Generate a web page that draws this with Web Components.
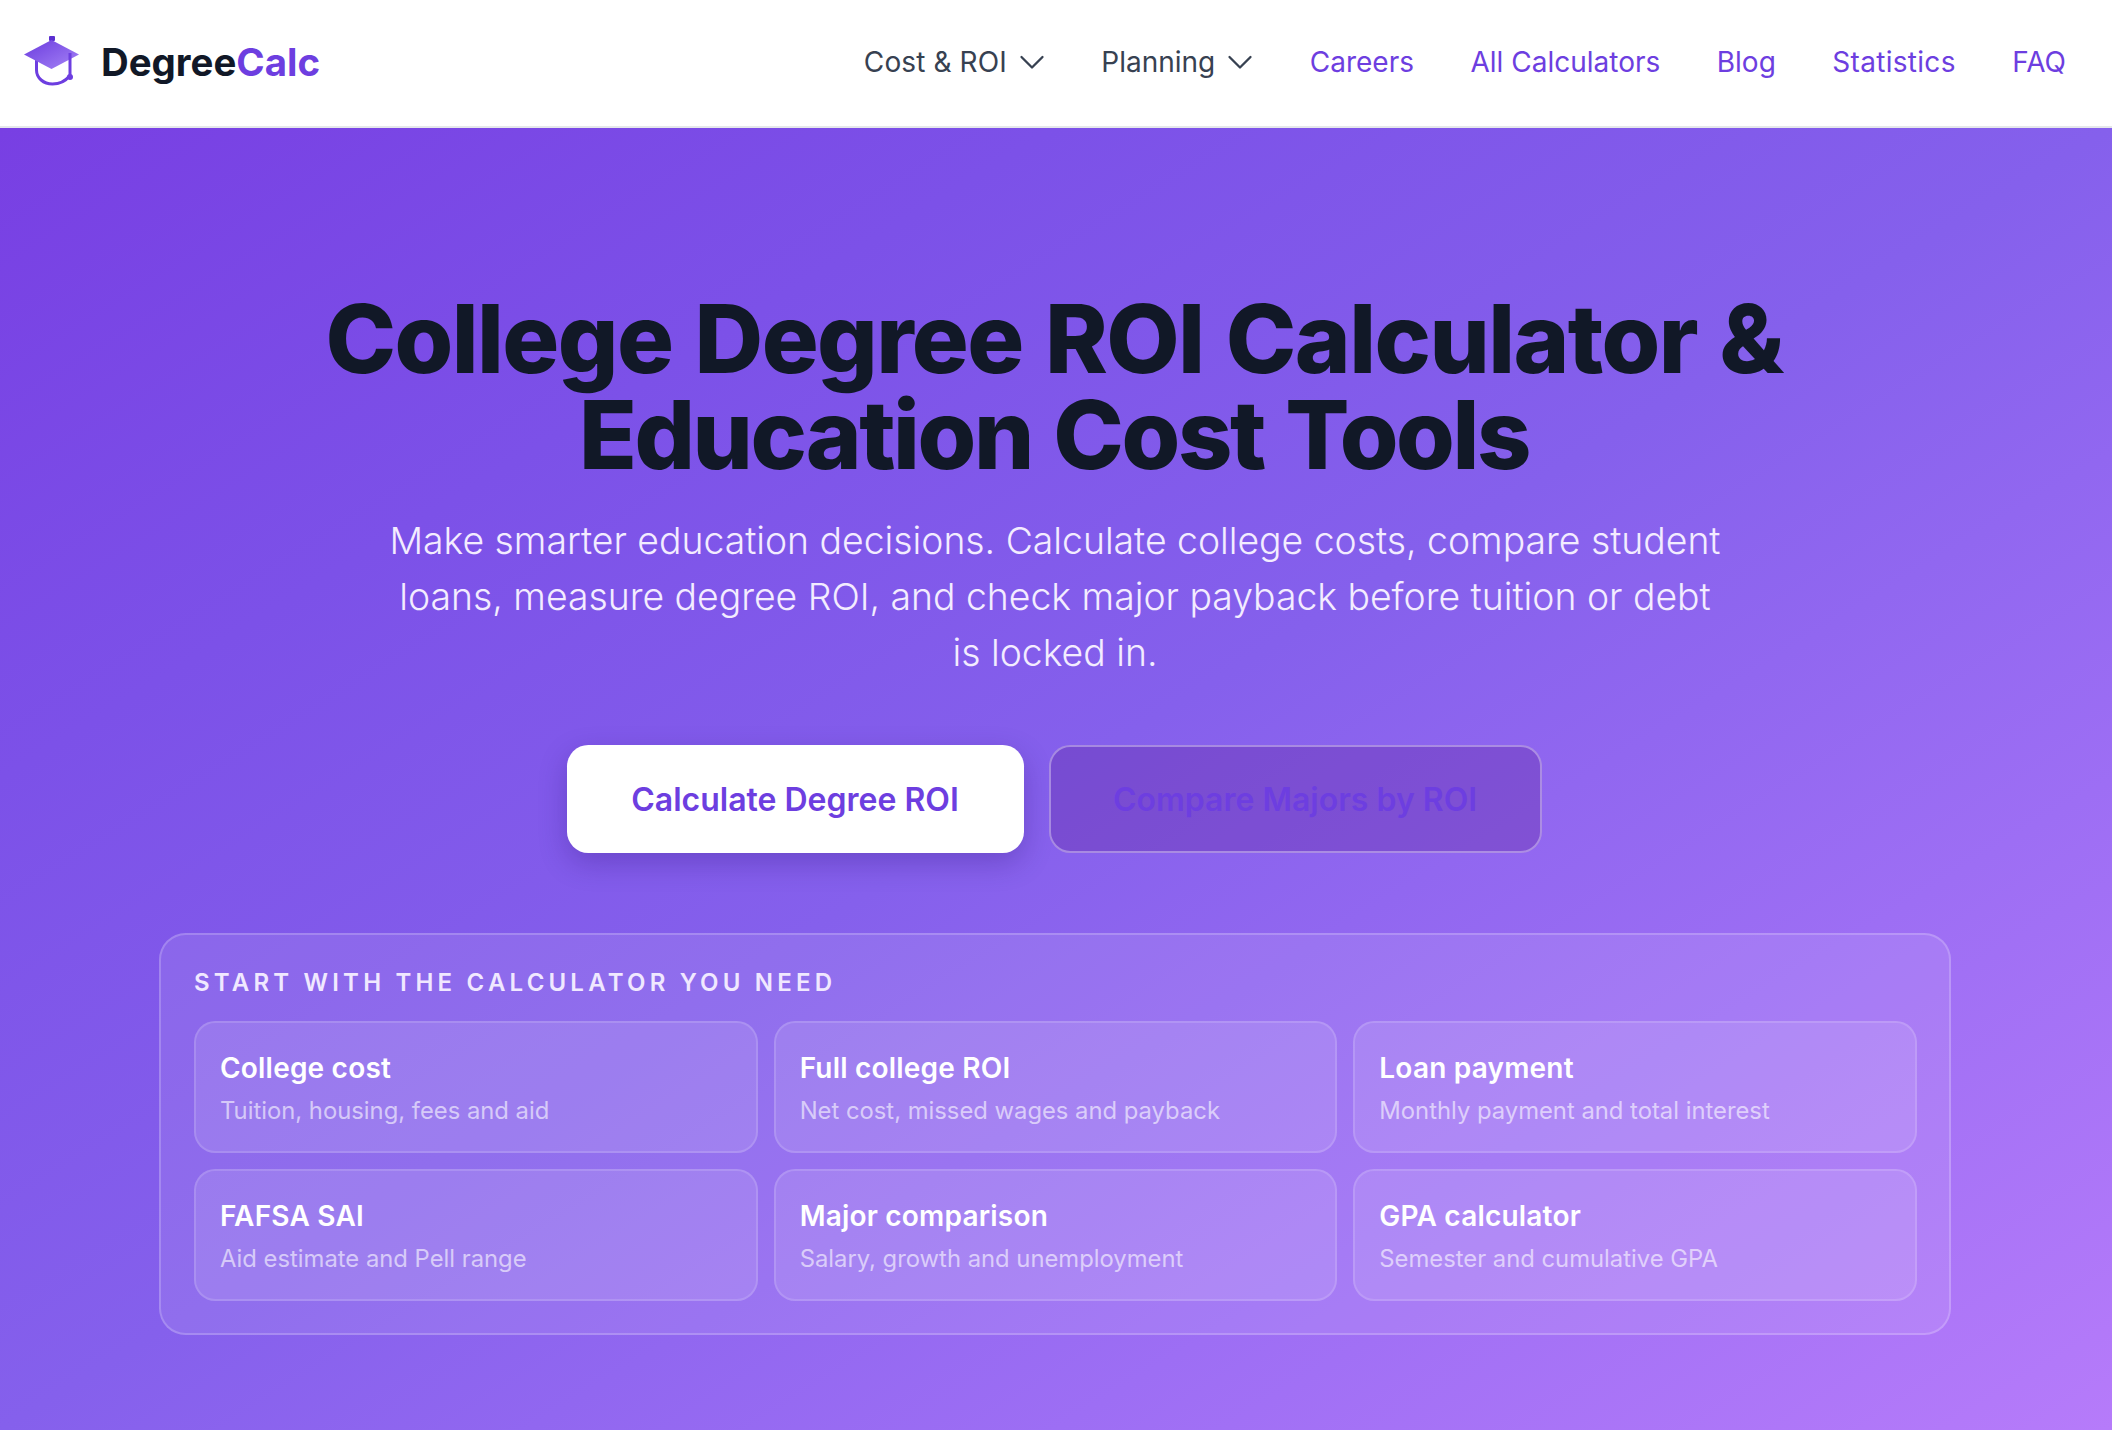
<!DOCTYPE html>
<html lang="en"><head><meta charset="utf-8"><title>DegreeCalc</title>
<style>
html,body{margin:0;padding:0;height:1430px;overflow:hidden;background:#fff}
body{font-family:Inter,"Liberation Sans",sans-serif}
</style></head><body>
<site-nav></site-nav>
<hero-section>
  <h1 slot="title">College Degree ROI Calculator &amp;<br><span style="letter-spacing:-2.400px">Education Cost Tools</span></h1>
  <span slot="sub">Make smarter education decisions. Calculate college costs, compare student loans, measure degree ROI, and check major payback before tuition or debt is locked in.</span>
  <cta-button slot="cta" kind="primary">Calculate Degree ROI</cta-button>
  <cta-button slot="cta" kind="ghost">Compare Majors by ROI</cta-button>
  <tool-panel slot="panel" heading="START WITH THE CALCULATOR YOU NEED">
    <tool-card name="College cost" desc="Tuition, housing, fees and aid"></tool-card>
    <tool-card name="Full college ROI" desc="Net cost, missed wages and payback"></tool-card>
    <tool-card name="Loan payment" desc="Monthly payment and total interest"></tool-card>
    <tool-card name="FAFSA SAI" desc="Aid estimate and Pell range"></tool-card>
    <tool-card name="Major comparison" desc="Salary, growth and unemployment"></tool-card>
    <tool-card name="GPA calculator" desc="Semester and cumulative GPA"></tool-card>
  </tool-panel>
</hero-section>
<script>
function def(name, html, setup){
  customElements.define(name, class extends HTMLElement{
    connectedCallback(){
      if(this.shadowRoot) return;
      const r=this.attachShadow({mode:'open'});
      r.innerHTML=html;
      if(setup) setup(this,r);
    }
  });
}
const chev='<svg width="26" height="24" viewBox="0 0 26 24" fill="none" stroke="currentColor" stroke-width="2.300" stroke-linecap="round" stroke-linejoin="round"><path d="M2.500 7l10.500 10.500L23.500 7"/></svg>';
def('site-nav',`<style>
:host{display:flex;align-items:center;justify-content:space-between;height:126px;padding:0 46px 0 24px;background:#fff;border-bottom:2px solid #e5e7eb;font-family:Inter,"Liberation Sans",sans-serif}
.logo{display:flex;align-items:center;gap:21px;font-size:38.400px;font-weight:700;color:#111827;text-decoration:none}
.logo b{font-weight:700;color:#6d3ee0}
.logo span{margin-bottom:2px}
.logo svg{display:block;margin-bottom:4px}
nav{display:flex;align-items:center;gap:56.500px;font-size:28px;margin-bottom:2px}
a{text-decoration:none;color:#6d3ee0;display:flex;align-items:center;gap:12px}
a.d{color:#374151}
a.c{letter-spacing:.1px}
a.s{letter-spacing:.3px}
</style>
<a class="logo" href="#"><svg width="56" height="50" viewBox="0 0 56 50"><defs><linearGradient id="g" x1="0" y1="0" x2="1" y2="1"><stop offset="0" stop-color="#6a3bde"/><stop offset="1" stop-color="#a684f6"/></linearGradient></defs>
<path d="M12.500 24v10c0 8 7 14 16 14c7 0 13-3 17-8" fill="none" stroke="#6d3ee0" stroke-width="3"/>
<rect x="25" y="0" width="6" height="5" rx="1" fill="#5b2fd0"/>
<path d="M27.500 4L55 18.500 27.500 33 0 18.500z" fill="url(#g)"/>
<path d="M46 17v24" stroke="#6d3ee0" stroke-width="3" fill="none"/><circle cx="46" cy="41" r="3" fill="#6d3ee0"/></svg>
<span>Degree<b>Calc</b></span></a>
<nav><a class="d c" href="#">Cost &amp; ROI ${chev}</a><a class="d" href="#">Planning ${chev}</a><a href="#">Careers</a><a href="#">All Calculators</a><a href="#">Blog</a><a class="s" href="#">Statistics</a><a href="#">FAQ</a></nav>`);
def('hero-section',`<style>
:host{display:block;height:1302px;box-sizing:border-box;padding:163px 161px 0 159px;background:linear-gradient(to bottom right,#783fe3 0%,#7c51e8 25%,#8560ec 50%,#9d6ef4 75%,#b67bfa 100%);font-family:Inter,"Liberation Sans",sans-serif;text-align:center}
::slotted(h1){margin:0 2px 0 0;font-size:95px;line-height:96px;font-weight:800;letter-spacing:-1.600px;word-spacing:3px;color:#111827}
.sub{max-width:1344px;margin:30px auto 0;font-size:37.330px;line-height:56px;font-weight:300;color:#f3ecff}
.cta{display:flex;justify-content:center;gap:25px;margin:64px 2px 0 0}
.panel{margin-top:80px}
</style>
<slot name="title"></slot>
<div class="sub"><slot name="sub"></slot></div>
<div class="cta"><slot name="cta"></slot></div>
<div class="panel"><slot name="panel"></slot></div>`);
def('cta-button',`<style>
:host{display:flex;align-items:center;justify-content:center;box-sizing:border-box;height:108px;border-radius:21.300px;font-size:32px;font-weight:600;color:#6d3ee0}
:host([kind=primary]){width:457px;background:#fff;box-shadow:0 10px 28px rgba(40,10,110,.26)}
:host([kind=ghost]){width:493px;background:rgba(90,30,150,.3);border:2px solid rgba(255,255,255,.35)}
</style><slot></slot>`);
def('tool-panel',`<style>
:host{display:block;box-sizing:border-box;width:1792px;padding:32px 32px 32px 33px;border:2px solid rgba(255,255,255,.2);border-radius:26.700px;background:rgba(255,255,255,.09);text-align:left}
.h{font-size:24px;line-height:32px;font-weight:600;letter-spacing:4.200px;color:#f0e8ff;margin-bottom:22px}
.g{display:grid;grid-template-columns:repeat(3,1fr);gap:16px}
</style><div class="h"></div><div class="g"><slot></slot></div>`,(h,r)=>{r.querySelector('.h').textContent=h.getAttribute('heading')});
def('tool-card',`<style>
:host{display:block;box-sizing:border-box;height:132px;padding:27px 24px 0;border:2px solid rgba(255,255,255,.14);border-radius:21.300px;background:rgba(255,255,255,.11)}
.n{font-size:28px;line-height:36px;font-weight:600;letter-spacing:.2px;color:#fff}
.d{margin-top:9px;font-size:23.800px;line-height:32px;font-weight:400;color:rgba(255,255,255,.6)}
</style><div class="n"></div><div class="d"></div>`,(h,r)=>{r.querySelector('.n').textContent=h.getAttribute('name');r.querySelector('.d').textContent=h.getAttribute('desc')});
</script>
</body></html>
